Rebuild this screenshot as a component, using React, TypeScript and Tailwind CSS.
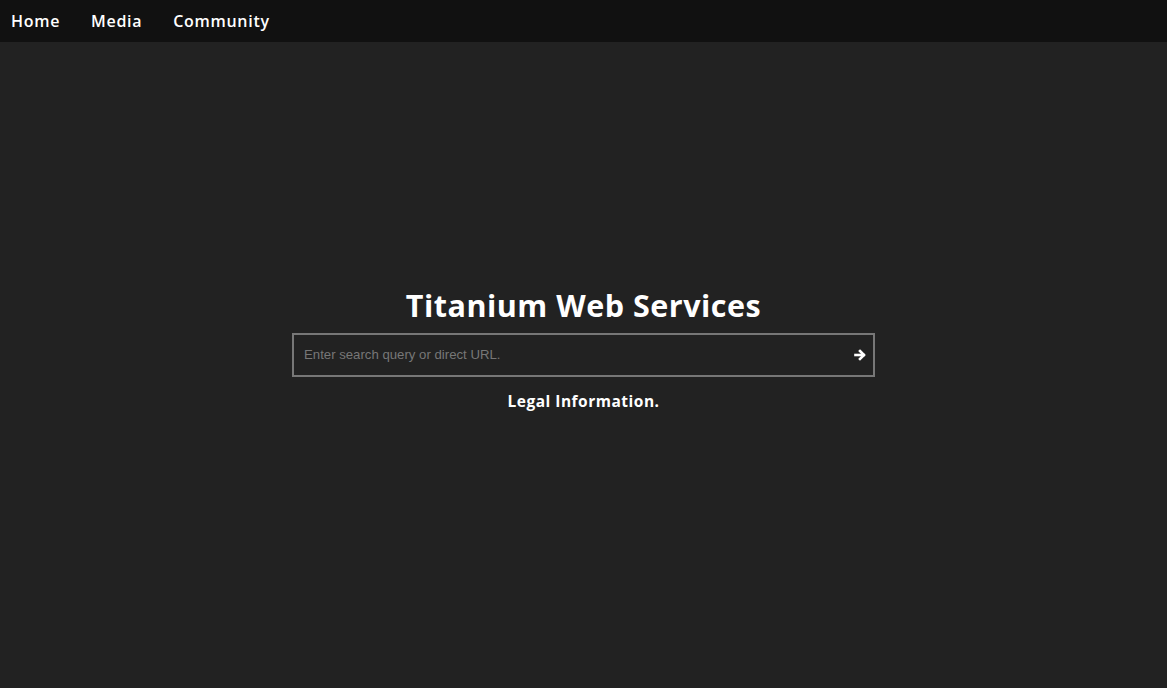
const font = { fontFamily: '"Open Sans", "Noto Sans", sans-serif' }

function Arrow() {
  return (
    <svg width="12" height="12" viewBox="0 0 12 12" fill="none" stroke="white" strokeWidth="2.6" strokeLinecap="square" strokeLinejoin="miter">
      <path d="M1.5 6h8" />
      <path d="M6 2l4 4-4 4" />
    </svg>
  )
}

export default function App() {
  return (
    <div className="min-h-screen h-[688px] bg-[#222222] flex flex-col text-white" style={font}>
      <nav className="h-[42px] bg-[#111111] flex items-center px-[11px] gap-[31px] shrink-0">
        <a className="text-[16px] font-semibold tracking-[0.7px]">Home</a>
        <a className="text-[16px] font-semibold tracking-[0.7px]">Media</a>
        <a className="text-[16px] font-semibold tracking-[0.7px]">Community</a>
      </nav>
      <main className="flex-1 flex flex-col items-center justify-center pb-[32px]">
        <h1 className="text-[30.5px] font-bold tracking-[0.5px] leading-[40px]">Titanium Web Services</h1>
        <div className="mt-[8px] w-[583px] h-[44px] border-2 border-[#777777] flex items-center pl-[10px] pr-[7px]">
          <input
            className="flex-1 bg-transparent outline-none text-[13.2px] text-white placeholder:text-[#777777]"
            style={{ fontFamily: '"Liberation Sans", Arial, sans-serif' }}
            placeholder="Enter search query or direct URL."
          />
          <Arrow />
        </div>
        <a className="mt-[13px] text-[15.5px] font-bold tracking-[0.5px]">Legal Information.</a>
      </main>
    </div>
  )
}
